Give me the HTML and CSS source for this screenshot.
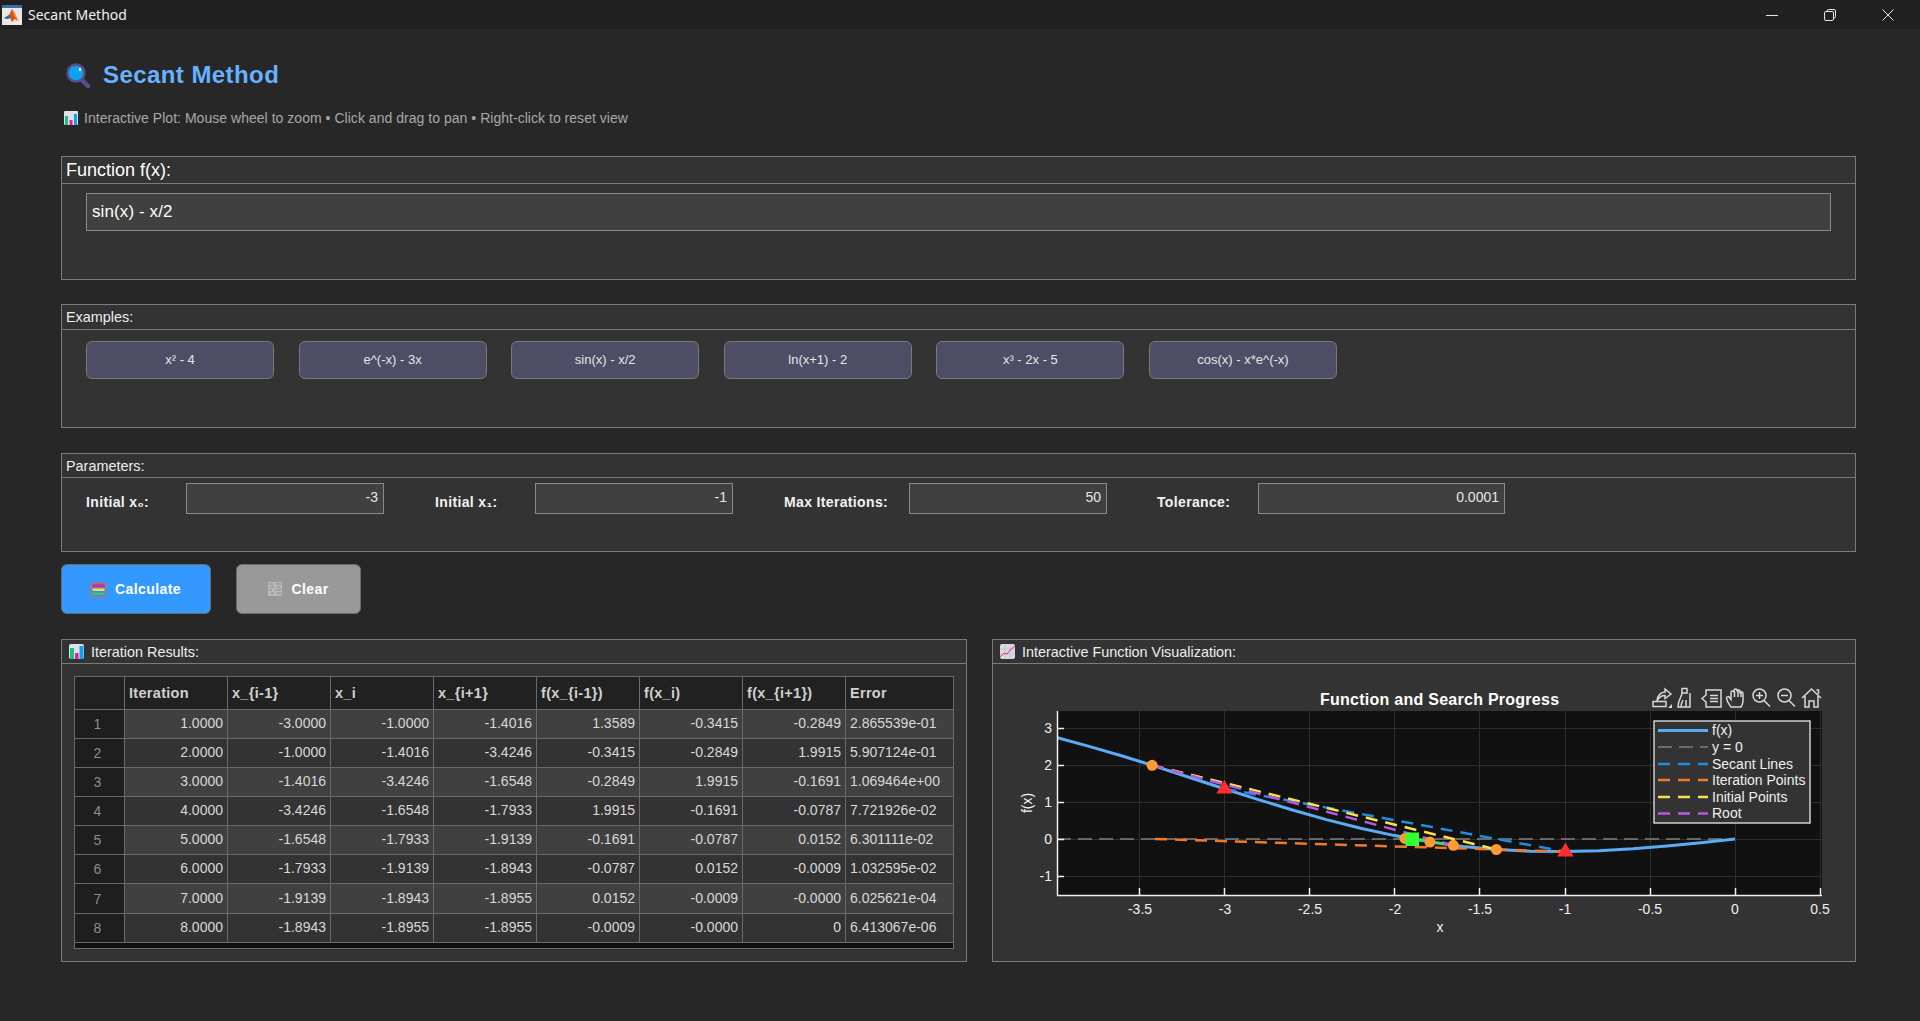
FILE: index.html
```html
<!DOCTYPE html>
<html lang="en">
<head>
<meta charset="utf-8">
<title>Secant Method</title>
<link rel="stylesheet" href="styles.css">
</head>
<body>
<header class="titlebar">
  <svg class="app-icon" width="20" height="20" viewBox="0 0 20 20"><rect x="0" y="0" width="20" height="20" fill="#e8e8e8"/><rect x="0" y="0" width="20" height="3" fill="#3d6ea8"/><path d="M2 13 L7 10 L10 4 L13 8 L16 16 L13 14 L10 17 L8 13 L5 14Z" fill="#d9541e"/><path d="M2 13 L7 10 L9 12 L6 14Z" fill="#2d6fb5"/><path d="M10 4 L13 8 L16 16 L12 10Z" fill="#f0a030"/></svg>
  <span class="app-name">Secant Method</span>
  <div class="win-controls">
    <svg class="win-min" width="12" height="12" viewBox="0 0 12 12"><path d="M0 6.5H12" stroke="#e6e6e6" fill="none"/></svg>
    <svg class="win-max" width="12" height="12" viewBox="0 0 12 12"><path d="M3 2.5V2a1.5 1.5 0 0 1 1.5-1.5H10A1.5 1.5 0 0 1 11.500 2v5.500A1.500 1.500 0 0 1 10 9h-.5" stroke="#e6e6e6" fill="none"/><rect x=".5" y="2.500" width="9" height="9" rx="1.500" stroke="#e6e6e6" fill="none"/></svg>
    <svg class="win-close" width="12" height="12" viewBox="0 0 12 12"><path d="M.5 .5L11.500 11.500M11.500 .5L.5 11.500" stroke="#e6e6e6" fill="none"/></svg>
  </div>
</header>
<main class="page">
  <div class="heading">
    <svg class="title-icon" width="25" height="25" viewBox="0 0 25 25"><path d="M16 17L22 23" stroke="#5b4a8c" stroke-width="4.500" stroke-linecap="round"/><circle cx="10" cy="10" r="8.500" fill="#0aa4ee" stroke="#5b4a8c" stroke-width="2.500"/><rect x="13" y="5" width="2" height="3" fill="#fff"/></svg>
    <h1 class="title">Secant Method</h1>
  </div>
  <div class="hint">
    <svg class="hint-icon" width="14" height="14" viewBox="0 0 14 14"><rect width="14" height="14" rx="1" fill="#e4def0"/><rect x="1" y="5" width="3" height="9" fill="#0bc87a"/><rect x="5.500" y="9" width="3" height="5" fill="#f01a8c"/><rect x="10" y="3" width="3" height="11" fill="#0aa4ee"/></svg>
    <span>Interactive Plot: Mouse wheel to zoom • Click and drag to pan • Right-click to reset view</span>
  </div>

  <section class="panel panel-function">
    <div class="panel-head head-large">Function f(x):</div>
    <div class="function-body"><div class="function-input">sin(x) - x/2</div></div>
  </section>

  <section class="panel panel-examples">
    <div class="panel-head head-examples">Examples:</div>
    <div class="examples-body">
      <button class="example">x² - 4</button>
      <button class="example">e^(-x) - 3x</button>
      <button class="example">sin(x) - x/2</button>
      <button class="example">ln(x+1) - 2</button>
      <button class="example">x³ - 2x - 5</button>
      <button class="example">cos(x) - x*e^(-x)</button>
    </div>
  </section>

  <section class="panel panel-params">
    <div class="panel-head">Parameters:</div>
    <div class="params-body">
      <label class="param-label w100">Initial x₀:</label><div class="param-input w197">-3</div>
      <label class="param-label w100 gap52">Initial x₁:</label><div class="param-input w197">-1</div>
      <label class="param-label w125 gap52">Max Iterations:</label><div class="param-input w198">50</div>
      <label class="param-label w101 gap50">Tolerance:</label><div class="param-input w247">0.0001</div>
    </div>
  </section>

  <div class="actions">
    <button class="action action-calc">
      <svg width="15" height="15" viewBox="0 0 15 15"><rect x=".5" y=".5" width="14" height="14" rx="2.500" fill="#3a8fe0" stroke="#f0603a"/><rect x="1.500" y="2.500" width="12" height="2.500" fill="#f01a8c"/><rect x="1.500" y="6.500" width="12" height="2.500" fill="#e8e050"/><rect x="1.500" y="10.500" width="12" height="2.500" fill="#30c880"/></svg>
      <span>Calculate</span>
    </button>
    <button class="action action-clear">
      <svg width="14" height="14" viewBox="0 0 14 14"><rect width="14" height="14" fill="#b8b8b8"/><path d="M1 2H5M8 2H13M2 5H6M9 5H12M1 8H4M7 8H13M3 11H6M9 11H13" stroke="#8c8c8c"/></svg>
      <span>Clear</span>
    </button>
  </div>

  <div class="results">
    <section class="panel panel-table">
      <div class="panel-head">
        <svg class="head-icon" width="15" height="15" viewBox="0 0 15 15"><rect width="15" height="15" rx="2" fill="#e4def0"/><rect x="1" y="4" width="4" height="11" fill="#0bc87a"/><rect x="6" y="9" width="3.500" height="6" fill="#f01a8c"/><rect x="10.500" y="2" width="4" height="13" fill="#0aa4ee"/></svg>
        Iteration Results:
      </div>
      <div class="table-body">
        <div class="table-wrap">
          <table class="grid">
            <thead><tr><th class="corner"></th><th>Iteration</th><th>x_{i-1}</th><th>x_i</th><th>x_{i+1}</th><th>f(x_{i-1})</th><th>f(x_i)</th><th>f(x_{i+1})</th><th class="last">Error</th></tr></thead>
            <tbody>
              <tr><th class="rownum">1</th><td>1.0000</td><td>-3.0000</td><td>-1.0000</td><td>-1.4016</td><td>1.3589</td><td>-0.3415</td><td>-0.2849</td><td class="err">2.865539e-01</td></tr>
              <tr><th class="rownum">2</th><td>2.0000</td><td>-1.0000</td><td>-1.4016</td><td>-3.4246</td><td>-0.3415</td><td>-0.2849</td><td>1.9915</td><td class="err">5.907124e-01</td></tr>
              <tr><th class="rownum">3</th><td>3.0000</td><td>-1.4016</td><td>-3.4246</td><td>-1.6548</td><td>-0.2849</td><td>1.9915</td><td>-0.1691</td><td class="err">1.069464e+00</td></tr>
              <tr><th class="rownum">4</th><td>4.0000</td><td>-3.4246</td><td>-1.6548</td><td>-1.7933</td><td>1.9915</td><td>-0.1691</td><td>-0.0787</td><td class="err">7.721926e-02</td></tr>
              <tr><th class="rownum">5</th><td>5.0000</td><td>-1.6548</td><td>-1.7933</td><td>-1.9139</td><td>-0.1691</td><td>-0.0787</td><td>0.0152</td><td class="err">6.301111e-02</td></tr>
              <tr><th class="rownum">6</th><td>6.0000</td><td>-1.7933</td><td>-1.9139</td><td>-1.8943</td><td>-0.0787</td><td>0.0152</td><td>-0.0009</td><td class="err">1.032595e-02</td></tr>
              <tr class="tall"><th class="rownum">7</th><td>7.0000</td><td>-1.9139</td><td>-1.8943</td><td>-1.8955</td><td>0.0152</td><td>-0.0009</td><td>-0.0000</td><td class="err">6.025621e-04</td></tr>
              <tr><th class="rownum">8</th><td>8.0000</td><td>-1.8943</td><td>-1.8955</td><td>-1.8955</td><td>-0.0009</td><td>-0.0000</td><td>0</td><td class="err">6.413067e-06</td></tr>
            </tbody>
          </table>
        </div>
      </div>
    </section>

    <section class="panel panel-plot">
      <div class="panel-head">
        <svg class="head-icon" width="15" height="15" viewBox="0 0 15 15"><rect width="15" height="15" rx="2" fill="#dcd6e8"/><path d="M0 5H15M0 10H15M5 0V15M10 0V15" stroke="#bdb5cf" stroke-width=".6"/><path d="M0 13L4 9L7 10L11 5L15 2" stroke="#f0305a" fill="none"/></svg>
        Interactive Function Visualization:
      </div>
      <svg class="plot" width="862" height="297" viewBox="993 664 862 297">
        <text class="plot-title" x="1320" y="705">Function and Search Progress</text>

        <g class="toolbar">
          <path d="M1653 706.500v-5h13v5zM1657 701c0-5 4-9 8-9v-3l6 5-6 4.500v-3c-3 0-6 1.500-8 5.500Z"/>
          <path class="tb-fill" d="M1672 704v4h-4z"/>
          <path d="M1682 688.500h5v4.500h-5zM1682 693c0 4-4 6-4 14h12v-14M1681 707c0-3 1-5 2-7M1686 707v-7"/>
          <path d="M1706 690h15v17h-15v-5l-4-3.500 4-3.500zM1710 695.500h8M1710 698.500h8M1710 701.500h8"/>
          <path d="M1731 707c-2-3-4-5-4.500-9 0-1.500 2-2 3-.5l1.500 2v-7c0-2 3-2 3 0v-2c0-2 3-2 3 0v1c0-2 3-2 3 0v2c0-2 3-2 3 0v7c0 3-1 5-2 6.500zM1734.500 691v6M1738 690v7M1741 691v6"/>
          <circle cx="1759.500" cy="695.500" r="6.500"/><path d="M1764 700.500l6 6M1756 695.500h7M1759.500 692v7"/>
          <circle cx="1784.500" cy="695.500" r="6.500"/><path d="M1789 700.500l6 6M1781 695.500h7"/>
          <path d="M1802 698l9.500-9 9.500 9M1805 696v11h4v-6h5v6h4v-11M1816.500 690h2v4"/>
        </g>

        <rect class="axes-bg" x="1057" y="711" width="765" height="184"/>
        <g class="gridline">
          <path d="M1139.500 711V895M1224.500 711V895M1309.500 711V895M1394.500 711V895M1479.500 711V895M1565.500 711V895M1650.500 711V895M1735.500 711V895M1820.500 711V895"/>
          <path d="M1057 728.500H1822M1057 765.500H1822M1057 802.500H1822M1057 839.500H1822M1057 876.500H1822"/>
        </g>

        <line class="l-zero" x1="1057" y1="839" x2="1735" y2="839"/>
        <polyline class="l-curve" points="1057.600,737.800 1088.200,746.100 1122.300,756 1156.300,766.600 1190.400,777.700 1224.400,788.700 1258.400,799.600 1292.500,810 1326.500,819.600 1360.600,828.200 1394.600,835.600 1428.600,841.700 1462.700,846.400 1496.700,849.600 1530.800,851.300 1564.800,851.600 1598.800,850.700 1632.900,848.800 1666.900,846 1701,842.700 1735,839"/>
        <line class="l-secant" x1="1224.400" y1="788.700" x2="1564.800" y2="851.600"/>
        <line class="l-iter" x1="1155" y1="839" x2="1564.800" y2="851.600"/>
        <line class="l-init" x1="1152.100" y1="765.300" x2="1496.400" y2="849.500"/>
        <line class="l-root" x1="1152.100" y1="765.300" x2="1453.300" y2="845.300"/>
        <line class="l-extra" x1="1412.400" y1="839" x2="1453.300" y2="845.300"/>
        <g class="m-iter">
          <circle cx="1152.100" cy="765.300" r="5.500"/>
          <circle cx="1405" cy="838.400" r="5.500"/>
          <circle cx="1430" cy="842" r="5.500"/>
          <circle cx="1453.300" cy="845.300" r="5.500"/>
          <circle cx="1496.400" cy="849.500" r="5.500"/>
        </g>
        <rect class="m-root" x="1405.500" y="832.500" width="13.500" height="13.500"/>
        <g class="m-init">
          <path d="M1224.400 780 L1232.600 793.500 H1216.200Z"/>
          <path d="M1565.400 842.500 L1573.600 856.500 H1557.200Z"/>
        </g>

        <g class="axis-line">
          <path d="M1057.500 711V895.500H1822"/>
          <path d="M1139.500 895V888M1224.500 895V888M1309.500 895V888M1394.500 895V888M1479.500 895V888M1565.500 895V888M1650.500 895V888M1735.500 895V888M1820.500 895V888"/>
          <path d="M1057 728.500H1064M1057 765.500H1064M1057 802.500H1064M1057 839.500H1064M1057 876.500H1064"/>
        </g>
        <g class="tick tick-x">
          <text x="1140" y="914">-3.5</text><text x="1225" y="914">-3</text><text x="1310" y="914">-2.5</text><text x="1395" y="914">-2</text><text x="1480" y="914">-1.5</text><text x="1565" y="914">-1</text><text x="1650" y="914">-0.5</text><text x="1735" y="914">0</text><text x="1820" y="914">0.5</text>
        </g>
        <g class="tick tick-y">
          <text x="1052" y="733">3</text><text x="1052" y="770">2</text><text x="1052" y="807">1</text><text x="1052" y="844">0</text><text x="1052" y="881">-1</text>
        </g>
        <text class="tick tick-x" x="1440" y="932">x</text>
        <text class="tick tick-x" transform="translate(1032 803) rotate(-90)">f(x)</text>

        <rect class="legend-box" x="1654" y="721" width="156" height="102"/>
        <line class="lg-curve" x1="1658" y1="730.500" x2="1708" y2="730.500"/>
        <line class="lg-zero" x1="1658" y1="747" x2="1708" y2="747"/>
        <line class="lg-secant" x1="1658" y1="764" x2="1708" y2="764"/>
        <line class="lg-iter" x1="1658" y1="780" x2="1708" y2="780"/>
        <line class="lg-init" x1="1658" y1="797" x2="1708" y2="797"/>
        <line class="lg-root" x1="1658" y1="813.500" x2="1708" y2="813.500"/>
        <g class="legend-text">
          <text x="1712" y="735">f(x)</text><text x="1712" y="752">y = 0</text><text x="1712" y="769">Secant Lines</text><text x="1712" y="785">Iteration Points</text><text x="1712" y="802">Initial Points</text><text x="1712" y="818">Root</text>
        </g>
      </svg>
    </section>
  </div>
</main>
</body>
</html>
```

FILE: styles.css
```css
* { box-sizing: border-box; }
html, body { margin: 0; padding: 0; }
body {
  width: 1920px;
  height: 1021px;
  overflow: hidden;
  background: #272727;
  color: #fff;
  font-family: "Liberation Sans", Arial, "DejaVu Sans", sans-serif;
}
.titlebar {
  display: flex;
  align-items: center;
  height: 29px;
  background: #202020;
  padding-left: 2px;
}
.app-icon { flex: none; }
.app-name {
  margin-left: 6px;
  font-family: "Noto Sans", sans-serif;
  font-size: 14px;
  color: #f0f0f0;
}
.win-controls {
  margin-left: auto;
  display: flex;
  gap: 46px;
  padding-right: 26px;
  align-items: center;
}
.page { padding: 0 64px 0 61px; }
.heading {
  display: flex;
  align-items: center;
  height: 34px;
  margin-top: 29px;
  padding-left: 5px;
}
.title-icon { flex: none; }
.title {
  margin: 0 0 0 12px;
  font-size: 24px;
  font-weight: 700;
  color: #66b2ff;
  letter-spacing: .43px;
}
.hint {
  display: flex;
  align-items: center;
  height: 16px;
  margin-top: 18px;
  padding-left: 3px;
  color: #a8a8a8;
  font-size: 14px;
  letter-spacing: .03px;
}
.hint-icon { margin-right: 6px; flex: none; }
.panel {
  background: #333;
  border: 1px solid #7a7a7a;
}
.panel-head {
  display: flex;
  align-items: center;
  height: 24px;
  padding-left: 4px;
  border-bottom: 1px solid #7a7a7a;
  font-size: 14.400px;
  color: #eee;
}
.head-large { height: 27px; font-size: 18px; color: #fff; }
.head-examples { height: 25px; }
.head-icon { margin: 0 7px 0 3px; flex: none; }
.panel-function { height: 124px; margin-top: 30px; }
.function-body { padding: 9px 24px 0; }
.function-input {
  height: 38px;
  line-height: 35px;
  padding-left: 5px;
  background: #404040;
  border: 1px solid #8a8a8a;
  font-size: 17px;
  letter-spacing: .1px;
}
.panel-examples { height: 124px; margin-top: 24px; }
.examples-body {
  display: flex;
  gap: 24.600px;
  padding: 11px 0 0 24px;
}
.example {
  width: 188px;
  height: 38px;
  padding: 0 0 2px;
  background: #4d4d66;
  border: 1px solid #787878;
  border-radius: 6px;
  color: #e6e6e6;
  font: 13px "Liberation Sans", Arial, "DejaVu Sans", sans-serif;
}
.panel-params { height: 99px; margin-top: 25px; }
.params-body {
  display: flex;
  align-items: flex-start;
  padding: 5px 0 0 24px;
}
.param-label {
  padding-top: 11px;
  font-size: 14px;
  font-weight: 700;
  letter-spacing: .35px;
  color: #f2f2f2;
}
.param-input {
  height: 31px;
  line-height: 27px;
  padding-right: 5px;
  text-align: right;
  background: #404040;
  border: 1px solid #8a8a8a;
  font-size: 14px;
  color: #e6e6e6;
}
.w100 { width: 100px; }
.w125 { width: 125px; }
.w101 { width: 101px; }
.w197 { width: 198px; }
.w198 { width: 198px; }
.w247 { width: 247px; }
.gap52 { margin-left: 51px; }
.gap50 { margin-left: 50px; }
.actions {
  display: flex;
  gap: 25px;
  margin-top: 12px;
}
.action {
  display: flex;
  align-items: center;
  justify-content: center;
  gap: 9px;
  height: 50px;
  border: 1px solid #6c6c6c;
  border-radius: 6px;
  color: #fff;
  font: 700 14px "Liberation Sans", Arial, sans-serif;
  letter-spacing: .4px;
}
.action-calc { width: 150px; background: #3399ff; }
.action-clear { width: 125px; background: #999; }
.results {
  display: flex;
  gap: 25px;
  margin-top: 25px;
}
.panel-table { width: 906px; height: 323px; }
.panel-plot { width: 864px; height: 323px; }
.table-body { padding: 12px 12px 0; }
.table-wrap {
  width: 880px;
  height: 273px;
  background: #111;
  border: 1px solid #6a6a6a;
}
.grid {
  table-layout: fixed;
  width: 878px;
  border-collapse: separate;
  border-spacing: 0;
  font-size: 14px;
}
.grid th, .grid td {
  padding: 0 4px;
  border-right: 1px solid #6a6a6a;
  border-bottom: 1px solid #6a6a6a;
  overflow: hidden;
  white-space: nowrap;
}
.grid thead th {
  width: 103px;
  height: 33px;
  text-align: left;
  font-weight: 700;
  font-size: 14.500px;
  letter-spacing: .3px;
  background: #212121;
  color: #d0d0d0;
}
.grid thead th.corner { width: 50px; background: #212121; }
.grid thead th.last { width: 107px; border-right: none; }
.grid tbody tr { height: 29px; }
.grid tbody tr.tall { height: 30px; }
.grid td {
  text-align: right;
  padding-bottom: 2px;
  color: #d8d8d8;
  background: #333;
}
.grid tbody tr:nth-child(odd) td { background: #404040; }
.grid td.err {
  text-align: left;
  border-right: none;
}
.grid th.rownum {
  text-align: center;
  font-weight: 400;
  padding-right: 8px;
  background: #1e1e1e;
  color: #8c8c8c;
}
.plot { display: block; }
.plot-title { font-size: 16px; font-weight: 700; fill: #fff; letter-spacing: .26px; }
.toolbar path, .toolbar circle { fill: none; stroke: #d8d8d8; stroke-width: 1.500; }
.toolbar .tb-fill { fill: #d8d8d8; stroke: none; }
.axes-bg { fill: #111; }
.gridline path { fill: none; stroke: #2e2e2e; stroke-width: 1; }
.axis-line path { fill: none; stroke: #f0f0f0; stroke-width: 1.500; }
.l-zero, .lg-zero { stroke: #808080; stroke-width: 1.500; stroke-dasharray: 14 7; }
.l-curve { fill: none; stroke: #5cacf5; stroke-width: 3; }
.l-secant, .lg-secant { stroke: #1f8ee0; stroke-width: 2.500; stroke-dasharray: 12 8; }
.l-iter, .lg-iter { stroke: #f07a28; stroke-width: 2.500; stroke-dasharray: 12 8; }
.l-init, .lg-init { stroke: #fbe04e; stroke-width: 2.500; stroke-dasharray: 12 8; }
.l-root, .lg-root { stroke: #b65ae6; stroke-width: 2.500; stroke-dasharray: 12 8; }
.l-extra { stroke: #3ce04a; stroke-width: 2.500; stroke-dasharray: 12 8; }
.lg-curve { stroke: #5cacf5; stroke-width: 3; }
.m-iter circle { fill: #ff9a33; }
.m-root { fill: #33ff33; }
.m-init path { fill: #ff2d2d; }
.tick text, .tick { font-size: 14px; fill: #f0f0f0; }
.tick-x text, text.tick-x { text-anchor: middle; }
.tick-y text { text-anchor: end; }
.legend-box { fill: #333; stroke: #d0d0d0; stroke-width: 1.500; }
.legend-text text { font-size: 14px; fill: #f0f0f0; }
```
